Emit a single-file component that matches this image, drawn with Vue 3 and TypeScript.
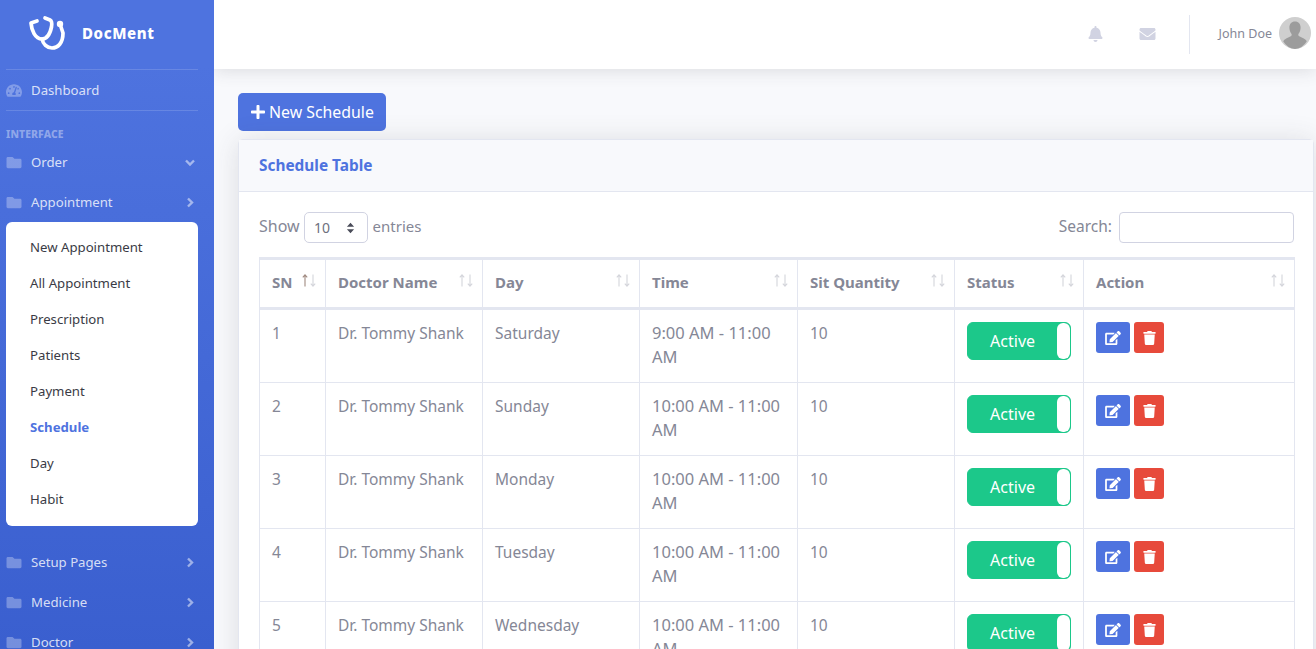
<script setup lang="ts">
interface Row { sn: number; day: string; time: string }
const rows: Row[] = [
  { sn: 1, day: 'Saturday', time: '9:00 AM - 11:00 AM' },
  { sn: 2, day: 'Sunday', time: '10:00 AM - 11:00 AM' },
  { sn: 3, day: 'Monday', time: '10:00 AM - 11:00 AM' },
  { sn: 4, day: 'Tuesday', time: '10:00 AM - 11:00 AM' },
  { sn: 5, day: 'Wednesday', time: '10:00 AM - 11:00 AM' },
]
const columns: string[] = ['SN', 'Doctor Name', 'Day', 'Time', 'Sit Quantity', 'Status', 'Action']
const widths: number[] = [66, 157, 157, 158, 157, 129, 211]
const subItems: string[] = ['New Appointment', 'All Appointment', 'Prescription', 'Patients', 'Payment', 'Schedule', 'Day', 'Habit']
const folder = 'M464 128H272l-64-64H48C21.49 64 0 85.49 0 112v288c0 26.51 21.49 48 48 48h416c26.51 0 48-21.49 48-48V176c0-26.51-21.49-48-48-48z'
const chevron = 'M2 1.5 6 5.5 2 9.5'
</script>

<template>
  <div class="page">
    <aside class="sidebar">
      <div class="brand">
        <svg class="logo" viewBox="0 0 44 40" fill="none" stroke="#fff" stroke-width="3.7" stroke-linecap="round" stroke-linejoin="round">
          <path d="M13 9 L7 11 C7.5 18 11 27 18 27 C23 27 26 22 27.5 15 C28 12 28 9 26 8 L21 6" />
          <path d="M18 27 C19 32 23 36 28 36 C34 36 39 31 39 21 L37 15" />
          <circle cx="36" cy="12" r="3.2" fill="#fff" stroke="none" />
        </svg>
        <span class="brand-text">DocMent</span>
      </div>
      <hr class="rule" />
      <div class="nav-item dash">
        <svg class="nav-icon" viewBox="0 0 576 512"><path fill-rule="evenodd" d="M288 32C128.94 32 0 160.94 0 320c0 52.8 14.25 102.26 39.06 144.8 5.61 9.62 16.3 15.2 27.44 15.2h443c11.14 0 21.83-5.58 27.44-15.2C561.75 422.26 576 372.8 576 320c0-159.06-128.94-288-288-288zm0 64c14.71 0 26.58 10.13 30.32 23.65-1.11 2.26-2.64 4.23-3.45 6.67l-9.22 27.67c-5.13 3.49-10.97 6.01-17.64 6.01-17.67 0-32-14.33-32-32S270.33 96 288 96zM96 384c-17.67 0-32-14.33-32-32s14.33-32 32-32 32 14.33 32 32-14.33 32-32 32zm48-160c-17.67 0-32-14.33-32-32s14.33-32 32-32 32 14.33 32 32-14.33 32-32 32zm246.77-72.41l-61.33 184C343.13 347.33 352 364.54 352 384c0 11.72-3.38 22.55-8.88 32H232.88c-5.5-9.45-8.88-20.28-8.88-32 0-33.94 26.5-61.43 59.9-63.59l61.34-184.01c4.17-12.56 17.73-19.45 30.36-15.17 12.57 4.19 19.35 17.79 15.17 30.36zm14.66 57.2l15.52-46.55c3.47-1.29 7.13-2.23 11.05-2.23 17.67 0 32 14.33 32 32s-14.33 32-32 32c-11.38-.01-20.89-6.28-26.57-15.22zM480 384c-17.67 0-32-14.33-32-32s14.33-32 32-32 32 14.33 32 32-14.33 32-32 32z" /></svg>
        <span>Dashboard</span>
      </div>
      <hr class="rule" />
      <div class="nav-heading">INTERFACE</div>
      <div class="nav-item">
        <svg class="nav-icon" viewBox="0 0 512 512"><path :d="folder" /></svg>
        <span>Order</span>
        <svg class="chev down" viewBox="0 0 8 11"><path :d="chevron" /></svg>
      </div>
      <div class="nav-item">
        <svg class="nav-icon" viewBox="0 0 512 512"><path :d="folder" /></svg>
        <span>Appointment</span>
        <svg class="chev" viewBox="0 0 8 11"><path :d="chevron" /></svg>
      </div>
      <div class="submenu">
        <div v-for="item in subItems" :key="item" class="sub-item" :class="{ active: item === 'Schedule' }">{{ item }}</div>
      </div>
      <div v-for="label in ['Setup Pages', 'Medicine', 'Doctor']" :key="label" class="nav-item">
        <svg class="nav-icon" viewBox="0 0 512 512"><path :d="folder" /></svg>
        <span>{{ label }}</span>
        <svg class="chev" viewBox="0 0 8 11"><path :d="chevron" /></svg>
      </div>
    </aside>

    <div class="main">
      <header class="topbar">
        <svg class="top-icon bell" viewBox="0 0 448 512"><path d="M224 512c35.32 0 63.97-28.65 63.97-64H160.03c0 35.35 28.65 64 63.97 64zm215.39-149.71c-19.32-20.76-55.47-51.99-55.47-154.29 0-77.7-54.48-139.9-127.94-155.16V32c0-17.67-14.32-32-31.98-32s-31.98 14.33-31.98 32v20.84C118.56 68.1 64.08 130.3 64.08 208c0 102.3-36.15 133.53-55.47 154.29-6 6.45-8.66 14.16-8.61 21.71.11 16.4 12.98 32 32.1 32h383.8c19.12 0 32-15.6 32.1-32 .05-7.55-2.61-15.27-8.61-21.71z" /></svg>
        <svg class="top-icon mail" viewBox="0 0 512 512"><path d="M502.3 190.8c3.9-3.1 9.7-.2 9.7 4.7V400c0 26.5-21.5 48-48 48H48c-26.5 0-48-21.5-48-48V195.6c0-5 5.7-7.8 9.7-4.7 22.4 17.4 52.1 39.5 154.1 113.6 21.1 15.4 56.7 47.8 92.2 47.6 35.7.3 72-32.8 92.3-47.6 102-74.1 131.6-96.3 154-113.7zM256 320c23.2.4 56.6-29.2 73.4-41.4 132.7-96.3 142.8-104.7 173.4-128.7 5.8-4.5 9.2-11.5 9.2-18.9v-19c0-26.5-21.5-48-48-48H48C21.5 64 0 85.5 0 112v19c0 7.4 3.4 14.3 9.2 18.9 30.6 23.9 40.7 32.4 173.4 128.7 16.8 12.2 50.2 41.8 73.4 41.4z" /></svg>
        <div class="divider"></div>
        <span class="user">John Doe</span>
        <svg class="avatar" viewBox="0 0 32 32">
          <circle cx="16" cy="16" r="16" fill="#cfcfcf" />
          <path fill="#9c9c9c" d="M16 4.5c3.6 0 5.6 2.6 5.6 6 0 2.6-.8 4.6-2 6.2-.6.8-.4 2 .6 2.5l4.6 2.2c1.4.7 2.4 1.6 3 2.8A16 16 0 0 1 16 32 16 16 0 0 1 4.2 24.2c.6-1.2 1.6-2.1 3-2.8l4.6-2.2c1-.5 1.2-1.7.6-2.5-1.2-1.6-2-3.6-2-6.2 0-3.4 2-6 5.6-6z" />
        </svg>
      </header>

      <section class="content">
        <button class="new-btn">
          <svg class="plus" viewBox="0 0 448 512"><path d="M416 208H272V64c0-17.67-14.33-32-32-32h-32c-17.67 0-32 14.33-32 32v144H32c-17.67 0-32 14.33-32 32v32c0 17.67 14.33 32 32 32h144v144c0 17.67 14.33 32 32 32h32c17.67 0 32-14.33 32-32V304h144c17.67 0 32-14.33 32-32v-32c0-17.67-14.33-32-32-32z" /></svg>
          New Schedule
        </button>
        <div class="card">
          <div class="card-head">Schedule Table</div>
          <div class="card-body">
            <div class="controls">
              <div class="length">
                Show
                <div class="select"><span>10</span>
                  <svg class="updown" viewBox="0 0 10 14"><path d="M5 1 9.2 5.6H.8zM5 13 .8 8.4h8.4z" /></svg>
                </div>
                <span class="entries">entries</span>
              </div>
              <div class="search">Search: <div class="input"></div></div>
            </div>
            <table class="table">
              <colgroup><col v-for="(w, i) in widths" :key="i" :style="{ width: w + 'px' }" /></colgroup>
              <thead>
                <tr>
                  <th v-for="(c, i) in columns" :key="c">
                    {{ c }}
                    <svg class="sort" viewBox="0 0 14 13" fill="none" stroke-width="1.1">
                      <path :class="i === 0 ? 'sort-on' : 'sort-off'" d="M3 12.5V1M.8 3.4 3 .9l2.2 2.5" />
                      <path class="sort-off" d="M11 .5V12M8.8 9.6l2.2 2.5 2.2-2.5" />
                    </svg>
                  </th>
                </tr>
              </thead>
              <tbody>
                <tr v-for="r in rows" :key="r.sn">
                  <td>{{ r.sn }}</td>
                  <td>Dr. Tommy Shank</td>
                  <td>{{ r.day }}</td>
                  <td class="time">{{ r.time }}</td>
                  <td>10</td>
                  <td>
                    <div class="switch"><span>Active</span><b class="knob"></b></div>
                  </td>
                  <td>
                    <div class="actions">
                      <div class="act edit"><svg viewBox="0 0 576 512"><path d="M402.6 83.2l90.2 90.2c3.8 3.8 3.8 10 0 13.8L274.4 405.6l-92.8 10.3c-12.4 1.4-22.9-9.1-21.5-21.5l10.3-92.8L388.8 83.2c3.8-3.8 10-3.8 13.8 0zm162-22.9l-48.8-48.8c-15.2-15.2-39.9-15.2-55.2 0l-35.4 35.4c-3.8 3.8-3.8 10 0 13.8l90.2 90.2c3.8 3.8 10 3.8 13.8 0l35.4-35.4c15.2-15.3 15.2-40 0-55.2zM384 346.2V448H64V128h229.8c3.2 0 6.2-1.3 8.5-3.5l40-40c7.6-7.6 2.2-20.5-8.5-20.5H48C21.5 64 0 85.5 0 112v352c0 26.5 21.5 48 48 48h352c26.5 0 48-21.5 48-48V306.2c0-10.7-12.9-16-20.5-8.5l-40 40c-2.2 2.3-3.5 5.3-3.5 8.5z" /></svg></div>
                      <div class="act del"><svg viewBox="0 0 448 512"><path d="M432 32H312l-9.4-18.7A24 24 0 0 0 281.1 0H166.8a23.72 23.72 0 0 0-21.4 13.3L136 32H16A16 16 0 0 0 0 48v32a16 16 0 0 0 16 16h416a16 16 0 0 0 16-16V48a16 16 0 0 0-16-16zM53.2 467a48 48 0 0 0 47.9 45h245.8a48 48 0 0 0 47.9-45L416 128H32z" /></svg></div>
                    </div>
                  </td>
                </tr>
              </tbody>
            </table>
          </div>
        </div>
      </section>
    </div>
  </div>
</template>

<style>
html, body { margin: 0; height: 649px; overflow: hidden; }
</style>

<style scoped>
.page {
  display: flex;
  height: 649px;
  overflow: hidden;
  font-family: "Noto Sans", "Liberation Sans", sans-serif;
  color: #858796;
  font-size: 16px;
  background: #f8f9fc;
}
.sidebar {
  width: 214px;
  flex: none;
  padding: 0 16px 0 6px;
  box-sizing: border-box;
  background: linear-gradient(180deg, #4e73df 65px, #3a5fcf 649px);
  color: rgba(255, 255, 255, .8);
  position: relative;
  z-index: 2;
}
.brand { height: 69px; display: flex; align-items: center; padding-left: 18px; gap: 14px; }
.logo { width: 44px; height: 40px; margin-top: -5px; flex: none; }
.brand-text { color: #fff; font-weight: 800; font-size: 15px; letter-spacing: .6px; margin-top: -3px; }
.rule { border: 0; border-top: 1px solid rgba(255, 255, 255, .15); margin: 0; }
.nav-item { height: 40px; display: flex; align-items: center; font-size: 13.2px; color: rgba(255, 255, 255, .8); }
.nav-item span { flex: 1; }
.nav-icon { width: 16px; height: 15px; margin-right: 9px; flex: none; fill: rgba(255, 255, 255, .3); }
.chev { width: 8px; height: 11px; fill: none; stroke: rgba(255, 255, 255, .5); stroke-width: 2.4; margin-right: 4px; }
.chev.down { transform: rotate(90deg); }
.nav-heading { height: 31px; padding-top: 17px; box-sizing: border-box; font-size: 10.4px; line-height: 12px; font-weight: 800; letter-spacing: .1px; color: rgba(255, 255, 255, .4); }
.submenu { background: #fff; border-radius: 6px; padding: 7px 0 9px; margin-bottom: 16px; }
.sub-item { height: 36px; display: flex; align-items: center; padding-left: 24px; font-size: 13.2px; color: #3a3b45; }
.sub-item.active { color: #4e73df; font-weight: 700; }

.main { flex: 1; min-width: 0; display: flex; flex-direction: column; }
.topbar {
  height: 69px;
  flex: none;
  background: #fff;
  box-shadow: 0 2px 16px rgba(58, 59, 69, .15);
  display: flex;
  align-items: center;
  justify-content: flex-end;
  padding-right: 5px;
  position: relative;
}
.top-icon { fill: #d1d3e2; height: 16px; margin-top: -2px; }
.bell { width: 15px; margin-right: 36px; }
.mail { width: 17px; margin-right: 33px; }
.divider { width: 1px; height: 39px; background: #e3e6f0; margin-right: 29px; margin-top: -1px; }
.user { font-size: 12.5px; margin-right: 7px; margin-top: -3px; }
.avatar { width: 32px; height: 32px; margin-top: -3px; }
.content { padding: 24px 2px 0 24px; }
.new-btn {
  display: flex;
  align-items: center;
  gap: 4px;
  height: 38px;
  padding: 0 12px 0 13px;
  border: 0;
  border-radius: 5px;
  background: #4e73df;
  color: #fff;
  font: inherit;
  font-size: 15.85px;
  margin-bottom: 8px;
}
.plus { width: 14px; height: 16px; fill: #fff; }
.card {
  background: #fff;
  border: 1px solid #e3e6f0;
  border-radius: 5px;
  box-shadow: 0 2px 28px rgba(58, 59, 69, .15);
}
.card-head {
  height: 52px;
  box-sizing: border-box;
  padding: 0 0 0 20px;
  display: flex;
  align-items: center;
  background: #f8f9fc;
  border-bottom: 1px solid #e3e6f0;
  color: #4e73df;
  font-weight: 700;
  font-size: 15.4px;
}
.card-body { padding: 20px 19px 20px 20px; }
.controls { display: flex; justify-content: space-between; height: 31px; margin-bottom: 14px; }
.length, .search { display: flex; align-items: center; gap: 4px; font-size: 15.5px; margin-top: -3px; }
.length { gap: 4.5px; font-size: 16px; }
.entries { font-size: 15px; }
.search { gap: 7px; }
.select {
  width: 64px;
  height: 31px;
  box-sizing: border-box;
  border: 1px solid #d1d3e2;
  border-radius: 5px;
  display: flex;
  align-items: center;
  justify-content: space-between;
  padding: 0 12px 0 9px;
  font-size: 14px;
  color: #6e707e;
  margin-top: 3px;
}
.updown { width: 9px; height: 12px; fill: #4a4c59; }
.input { width: 175px; height: 31px; box-sizing: border-box; border: 1px solid #d1d3e2; border-radius: 4px; margin-top: 3px; background: #fff; }
.table { width: 1035px; table-layout: fixed; border-collapse: collapse; border-top: 3px solid #e3e6f0; }
.table th, .table td { border: 1px solid #e3e6f0; padding: 11px 12px 13px; text-align: left; vertical-align: top; line-height: 24px; font-size: 15.5px; font-weight: 400; }
.table td.time { font-size: 16.5px; }
.table th { position: relative; font-weight: 700; font-size: 15px; border-bottom-width: 3px; height: 24px; padding-top: 10px; }
.sort { position: absolute; right: 9px; top: 14px; width: 14px; height: 13px; }
.sort-off { stroke: #d4d5db; }
.sort-on { stroke: #a08a80; }
.switch {
  width: 104px;
  height: 38px;
  margin-top: 1px;
  box-sizing: border-box;
  border: 1px solid #1cc88a;
  border-radius: 6px;
  background: #1cc88a;
  color: #fff;
  display: flex;
  align-items: center;
  justify-content: space-between;
  overflow: hidden;
}
.switch span { width: 90px; text-align: center; font-size: 16px; padding-bottom: 1px; }
.knob { width: 13px; height: 36px; background: #fff; border-radius: 6px; }
.actions { display: flex; gap: 4px; margin-top: 1px; }
.act { height: 31px; border-radius: 3px; display: flex; align-items: center; justify-content: center; }
.act svg { fill: #fff; height: 14px; }
.edit { width: 34px; background: #4e73df; }
.edit svg { width: 16px; }
.del { width: 30px; background: #e74a3b; }
.del svg { width: 13px; }
</style>
